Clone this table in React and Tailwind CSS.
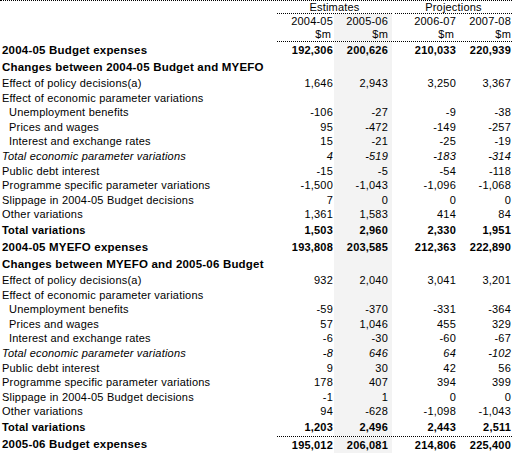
import React from "react";

const rows = [
  { label: "2004-05 Budget expenses", v: ["192,306", "200,626", "210,033", "220,939"], type: "total" },
  { label: "Changes between 2004-05 Budget and MYEFO", type: "heading" },
  { label: "Effect of policy decisions(a)", v: ["1,646", "2,943", "3,250", "3,367"] },
  { label: "Effect of economic parameter variations" },
  { label: "Unemployment benefits", v: ["-106", "-27", "-9", "-38"], indent: true },
  { label: "Prices and wages", v: ["95", "-472", "-149", "-257"], indent: true },
  { label: "Interest and exchange rates", v: ["15", "-21", "-25", "-19"], indent: true },
  { label: "Total economic parameter variations", v: ["4", "-519", "-183", "-314"], italic: true },
  { label: "Public debt interest", v: ["-15", "-5", "-54", "-118"] },
  { label: "Programme specific parameter variations", v: ["-1,500", "-1,043", "-1,096", "-1,068"] },
  { label: "Slippage in 2004-05 Budget decisions", v: ["7", "0", "0", "0"] },
  { label: "Other variations", v: ["1,361", "1,583", "414", "84"] },
  { label: "Total variations", v: ["1,503", "2,960", "2,330", "1,951"], type: "sub" },
  { label: "2004-05 MYEFO expenses", v: ["193,808", "203,585", "212,363", "222,890"], type: "total" },
  { label: "Changes between MYEFO and 2005-06 Budget", type: "heading" },
  { label: "Effect of policy decisions(a)", v: ["932", "2,040", "3,041", "3,201"] },
  { label: "Effect of economic parameter variations" },
  { label: "Unemployment benefits", v: ["-59", "-370", "-331", "-364"], indent: true },
  { label: "Prices and wages", v: ["57", "1,046", "455", "329"], indent: true },
  { label: "Interest and exchange rates", v: ["-6", "-30", "-60", "-67"], indent: true },
  { label: "Total economic parameter variations", v: ["-8", "646", "64", "-102"], italic: true },
  { label: "Public debt interest", v: ["9", "30", "42", "56"] },
  { label: "Programme specific parameter variations", v: ["178", "407", "394", "399"] },
  { label: "Slippage in 2004-05 Budget decisions", v: ["-1", "1", "0", "0"] },
  { label: "Other variations", v: ["94", "-628", "-1,098", "-1,043"] },
  { label: "Total variations", v: ["1,203", "2,496", "2,443", "2,511"], type: "sub" },
  { label: "2005-06 Budget expenses", v: ["195,012", "206,081", "214,806", "225,400"], type: "total", topline: true },
];

function Row({ r }) {
  const special = r.type === "total" || r.type === "heading" || r.type === "sub";
  const height = special ? "h-[17px]" : "h-[14.6px]";
  let labelCls = "text-[11px] tracking-[0.2px]";
  if (r.type === "total") labelCls = "text-[11.5px] font-bold tracking-[0.2px]";
  if (r.type === "heading") labelCls = "text-[11.5px] font-bold tracking-[0.2px]";
  if (r.type === "sub") labelCls = "text-[11px] font-bold tracking-[0.2px]";
  if (r.italic) labelCls = "text-[11px] italic tracking-[0.2px]";
  const numCls = r.type === "total" || r.type === "sub"
    ? "text-[11px] font-bold tracking-[0.2px]"
    : r.italic
    ? "text-[11px] italic tracking-[0.2px]"
    : "text-[11px] tracking-[0.2px]";
  const v = r.v || ["", "", "", ""];
  return (
    <div className={`flex ${height} items-center`}>
      <div className={`w-[277px] h-full flex items-center whitespace-nowrap ${r.indent ? "pl-[9px]" : "pl-[2px]"} ${labelCls}`}>
        {r.label}
      </div>
      <div className={`flex h-full w-[235px] ${r.topline ? "border-t border-dotted border-black" : ""}`}>
        <div className={`w-[57px] h-full flex items-center justify-end pr-[1px] ${numCls}`}>{v[0]}</div>
        <div className={`w-[58px] h-full flex items-center justify-end pr-[4px] bg-[#f3f3f3] ${numCls}`}>{v[1]}</div>
        <div className="w-[3px] h-full" />
        <div className={`w-[62px] h-full flex items-center justify-end pr-[1px] ${numCls}`}>{v[2]}</div>
        <div className={`w-[55px] h-full flex items-center justify-end pr-[1px] ${numCls}`}>{v[3]}</div>
      </div>
    </div>
  );
}

export default function App() {
  return (
    <div
      className="w-[512px] h-[453px] bg-white text-black overflow-hidden"
      style={{ fontFamily: '"Liberation Sans", Arial, sans-serif' }}
    >
      <div className="border-t border-b border-dotted border-black">
        {/* header row 1 */}
        <div className="flex h-[13px] text-[11px] tracking-[0.2px]">
          <div className="w-[277px]" />
          <div className="w-[115px] border-b border-dotted border-black flex items-center justify-center">Estimates</div>
          <div className="w-[3px]" />
          <div className="w-[117px] border-b border-dotted border-black flex items-center justify-center">Projections</div>
        </div>
        {/* header row 2 */}
        <div className="flex h-[14px] text-[11px] tracking-[0.2px]">
          <div className="w-[277px]" />
          <div className="w-[57px] flex items-center justify-end pr-[1px]">2004-05</div>
          <div className="w-[58px] flex items-center justify-end pr-[4px] bg-[#f3f3f3]">2005-06</div>
          <div className="w-[3px]" />
          <div className="w-[62px] flex items-center justify-end pr-[1px]">2006-07</div>
          <div className="w-[55px] flex items-center justify-end pr-[1px]">2007-08</div>
        </div>
        {/* header row 3 */}
        <div className="flex h-[14px] text-[11px] tracking-[0.2px]">
          <div className="w-[277px]" />
          <div className="flex w-[235px] border-b border-dotted border-black">
            <div className="w-[57px] flex items-center justify-end pr-[3px]">$m</div>
            <div className="w-[58px] flex items-center justify-end pr-[4px] bg-[#f3f3f3]">$m</div>
            <div className="w-[3px]" />
            <div className="w-[62px] flex items-center justify-end pr-[3px]">$m</div>
            <div className="w-[55px] flex items-center justify-end pr-[1px]">$m</div>
          </div>
        </div>
        {rows.map((r, i) => (
          <Row key={i} r={r} />
        ))}
      </div>
    </div>
  );
}
